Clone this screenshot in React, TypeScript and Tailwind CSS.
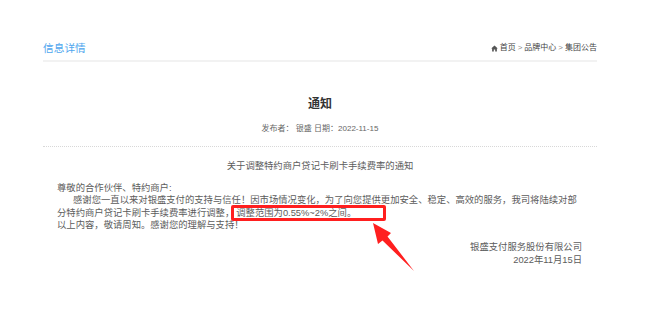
import React from 'react';

const FONT = '"Liberation Sans", "Noto Sans CJK SC", sans-serif';

// small filled house for the breadcrumb
const HomeGlyph: React.FC = () => (
    <svg width="7" height="7" viewBox="0 0 10 10" className="mr-[2px]">
        <path d="M5 0.6 L0.3 5 H1.6 V9.4 H4 V6.6 H6 V9.4 H8.4 V5 H9.7 Z" fill="#555" />
    </svg>
);

const App: React.FC = () => {
    return (
        <div className="relative w-[645px] h-[326px] bg-white overflow-hidden" style={{ fontFamily: FONT }}>
            <div className="ml-[43px] w-[554px] pt-[40px]">
                {/* header */}
                <div className="flex items-center justify-between h-[16px]">
                    <h2 className="text-[10.7px] leading-[16px] text-[#4ea6ee]">信息详情</h2>
                    <div className="flex items-center text-[8px] leading-[12px] text-[#444]">
                        <HomeGlyph />
                        <span>首页</span>
                        <span className="mx-[2px] text-[#888]">&gt;</span>
                        <span>品牌中心</span>
                        <span className="mx-[2px] text-[#888]">&gt;</span>
                        <span>集团公告</span>
                    </div>
                </div>
                <div className="mt-[4px] h-[2px] bg-[#f2f2f2]" />

                {/* article head */}
                <h1 className="mt-[34px] text-center text-[12px] leading-[16px] font-bold text-[#333]">通知</h1>
                <p className="mt-[11px] text-center text-[8px] leading-[12px] text-[#666]">发布者： 银盛 日期：2022-11-15</p>
                <div className="mt-[11px] border-t border-dotted border-[#d8d8d8]" />

                {/* article body */}
                <p className="mt-[12px] text-center text-[9.33px] leading-[14px] text-[#5c5c5c]">关于调整特约商户贷记卡刷卡手续费率的通知</p>
                <div className="mt-[9px] pl-[14px] pr-[15px] text-[9.33px] leading-[12.33px] text-[#5c5c5c]">
                    <p>尊敬的合作伙伴、特约商户:</p>
                    <p className="indent-[16px]">
                        感谢您一直以来对银盛支付的支持与信任！因市场情况变化，为了向您提供更加安全、稳定、高效的服务，我司将陆续对部分特约商户贷记卡刷卡手续费率进行调整，
                        <span className="ml-[2px]">调整范围为0.55%~2%之间。</span>
                    </p>
                    <p>以上内容，敬请周知。感谢您的理解与支持！</p>
                    <div className="mt-[10px] text-right leading-[13px]">
                        <p>银盛支付服务股份有限公司</p>
                        <p>2022年11月15日</p>
                    </div>
                </div>
            </div>

            {/* red annotation box + arrow drawn over the screenshot */}
            <div className="absolute left-[231px] top-[205px] w-[155px] h-[16px] border-[3px] border-[#ff1f1f] rounded-[2px]" />
            <svg className="absolute left-0 top-0" width="645" height="326" viewBox="0 0 645 326">
                <polygon
                    points="373,223 391,233 387.5,236.5 414,271 382.5,240.5 378,244"
                    fill="#ff1f1f"
                />
            </svg>
        </div>
    );
};

export default App;
